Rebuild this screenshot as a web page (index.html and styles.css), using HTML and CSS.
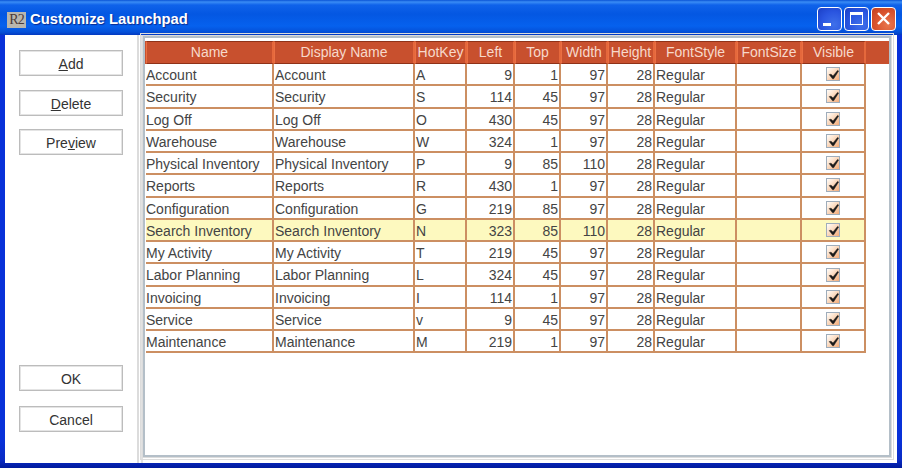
FILE: index.html
```html
<!DOCTYPE html>
<html lang="en">
<head>
    <meta charset="UTF-8">
    <title>Customize Launchpad</title>
    <link rel="stylesheet" href="styles.css">
</head>
<body>
<svg class="defs" width="0" height="0">
    <defs>
        <linearGradient id="checkFill" x1="0" y1="0" x2="1" y2="1">
            <stop offset="0" stop-color="#ffffff"/>
            <stop offset="0.35" stop-color="#fde6d2"/>
            <stop offset="1" stop-color="#f3a873"/>
        </linearGradient>
    </defs>
    <symbol id="check" viewBox="0 0 14 14">
        <rect x="0.5" y="0.5" width="13" height="13" fill="url(#checkFill)" stroke="#9fadbb"/>
        <path d="M3.2 7.6 L5 7.2 L7 9 L11.6 3.4 L12.6 4 L7.6 11.8 L6.6 11.8 Z" fill="#1a1a1a" stroke="#1a1a1a" stroke-width="0.5"/>
    </symbol>
</svg>
<div class="window">
    <div class="titlebar">
        <span class="appicon">R2</span>
        <span class="title">Customize Launchpad</span>
        <div class="winbtns">
            <span class="winbtn"><i class="min"></i></span>
            <span class="winbtn"><i class="max"></i></span>
            <span class="winbtn close">
                <svg width="17" height="17" viewBox="0 0 17 17"><path d="M3 3 L14 14 M14 3 L3 14" stroke="#fff" stroke-width="2.4" fill="none"/></svg>
            </span>
        </div>
    </div>
    <div class="content">
        <div class="side">
            <div class="btngroup">
                <p class="btn"><u>A</u>dd</p>
                <p class="btn"><u>D</u>elete</p>
                <p class="btn">Pre<u>v</u>iew</p>
            </div>
            <div class="btngroup">
                <p class="btn">OK</p>
                <p class="btn">Cancel</p>
            </div>
        </div>
        <div class="split"></div>
        <div class="pane">
            <div class="head">
                <div class="row">
                    <span>Name</span><span>Display Name</span><span>HotKey</span><span>Left</span><span>Top</span><span>Width</span><span>Height</span><span>FontStyle</span><span>FontSize</span><span>Visible</span>
                </div>
            </div>
            <div class="row item"><span>Account</span><span>Account</span><span>A</span><span class="num">9</span><span class="num">1</span><span class="num">97</span><span class="num">28</span><span>Regular</span><span></span><span class="vis"><svg width="14" height="14"><use href="#check"/></svg></span></div>
            <div class="row item"><span>Security</span><span>Security</span><span>S</span><span class="num">114</span><span class="num">45</span><span class="num">97</span><span class="num">28</span><span>Regular</span><span></span><span class="vis"><svg width="14" height="14"><use href="#check"/></svg></span></div>
            <div class="row item"><span>Log Off</span><span>Log Off</span><span>O</span><span class="num">430</span><span class="num">45</span><span class="num">97</span><span class="num">28</span><span>Regular</span><span></span><span class="vis"><svg width="14" height="14"><use href="#check"/></svg></span></div>
            <div class="row item"><span>Warehouse</span><span>Warehouse</span><span>W</span><span class="num">324</span><span class="num">1</span><span class="num">97</span><span class="num">28</span><span>Regular</span><span></span><span class="vis"><svg width="14" height="14"><use href="#check"/></svg></span></div>
            <div class="row item"><span>Physical Inventory</span><span>Physical Inventory</span><span>P</span><span class="num">9</span><span class="num">85</span><span class="num">110</span><span class="num">28</span><span>Regular</span><span></span><span class="vis"><svg width="14" height="14"><use href="#check"/></svg></span></div>
            <div class="row item"><span>Reports</span><span>Reports</span><span>R</span><span class="num">430</span><span class="num">1</span><span class="num">97</span><span class="num">28</span><span>Regular</span><span></span><span class="vis"><svg width="14" height="14"><use href="#check"/></svg></span></div>
            <div class="row item"><span>Configuration</span><span>Configuration</span><span>G</span><span class="num">219</span><span class="num">85</span><span class="num">97</span><span class="num">28</span><span>Regular</span><span></span><span class="vis"><svg width="14" height="14"><use href="#check"/></svg></span></div>
            <div class="row item selected"><span>Search Inventory</span><span>Search Inventory</span><span>N</span><span class="num">323</span><span class="num">85</span><span class="num">110</span><span class="num">28</span><span>Regular</span><span></span><span class="vis"><svg width="14" height="14"><use href="#check"/></svg></span></div>
            <div class="row item"><span>My Activity</span><span>My Activity</span><span>T</span><span class="num">219</span><span class="num">45</span><span class="num">97</span><span class="num">28</span><span>Regular</span><span></span><span class="vis"><svg width="14" height="14"><use href="#check"/></svg></span></div>
            <div class="row item"><span>Labor Planning</span><span>Labor Planning</span><span>L</span><span class="num">324</span><span class="num">45</span><span class="num">97</span><span class="num">28</span><span>Regular</span><span></span><span class="vis"><svg width="14" height="14"><use href="#check"/></svg></span></div>
            <div class="row item"><span>Invoicing</span><span>Invoicing</span><span>I</span><span class="num">114</span><span class="num">1</span><span class="num">97</span><span class="num">28</span><span>Regular</span><span></span><span class="vis"><svg width="14" height="14"><use href="#check"/></svg></span></div>
            <div class="row item"><span>Service</span><span>Service</span><span>v</span><span class="num">9</span><span class="num">45</span><span class="num">97</span><span class="num">28</span><span>Regular</span><span></span><span class="vis"><svg width="14" height="14"><use href="#check"/></svg></span></div>
            <div class="row item"><span>Maintenance</span><span>Maintenance</span><span>M</span><span class="num">219</span><span class="num">1</span><span class="num">97</span><span class="num">28</span><span>Regular</span><span></span><span class="vis"><svg width="14" height="14"><use href="#check"/></svg></span></div>
        </div>
    </div>
</div>
</body>
</html>
```

FILE: styles.css
```css
*{margin: 0;padding: 0;box-sizing: border-box;}
html,body{
    overflow: hidden;
    width: 902px;
    height: 468px;
}
body{
    font-family: "Liberation Sans", Arial, sans-serif;
    font-size: 14px;
    color: #444;
    background-color: #0831d9;
}
.defs{position: absolute;}

.window{
    display: flex;
    flex-direction: column;
    height: 468px;
    padding: 0 5px 5px;
    background: linear-gradient(#0831d9 0, #0831d9 440px, #0a2bc4 460px, #001a9c 468px);
}
.titlebar{
    display: flex;
    align-items: center;
    flex: none;
    height: 35px;
    margin: 0 -5px;
    padding: 5px 6px 0 7px;
    background: linear-gradient(#0a53d6 0, #3a8cf5 2px, #0f62ea 5px, #0457e2 14px, #0661ee 26px, #0450d8 32px, #0339c0 35px);
}
.appicon{
    width: 19px;
    height: 16px;
    margin-right: 4px;
    font-family: "Liberation Serif", serif;
    font-size: 14px;
    line-height: 16px;
    letter-spacing: -1px;
    text-align: center;
    color: #4a3a3a;
    background-color: #b9b6ae;
}
.title{
    flex: 1;
    padding-bottom: 2px;
    font-size: 14.8px;
    font-weight: bold;
    color: #fff;
    text-shadow: 1px 1px 1px #0a2a90;
}
.winbtns{display: flex;gap: 2px;margin-top: -3px;}
.winbtn{
    display: flex;
    position: relative;
    width: 25px;
    height: 24px;
    border: 1px solid #fff;
    border-radius: 4px;
    background: radial-gradient(circle at 70% 75%, #3f70ea, #2a55e0 55%, #1a3ec4);
}
.winbtn .min{
    position: absolute;
    left: 5px;
    bottom: 4px;
    width: 8px;
    height: 3px;
    background-color: #fff;
}
.winbtn .max{
    position: absolute;
    left: 5px;
    top: 4px;
    width: 13px;
    height: 13px;
    border: 1px solid #fff;
    border-top-width: 3px;
}
.winbtn.close{
    align-items: center;
    justify-content: center;
    background: radial-gradient(circle at 70% 75%, #e8764e, #d9532e 55%, #c23f1e);
}

.content{
    display: flex;
    flex: 1;
    min-height: 0;
    background-color: #fff;
}
.side{
    display: flex;
    flex-direction: column;
    justify-content: space-between;
    flex: none;
    width: 132px;
    padding: 15px 14px 31px;
}
.btngroup{display: flex;flex-direction: column;gap: 13.5px;}
.btngroup + .btngroup{gap: 15px;}
.btn{
    width: 104px;
    height: 26px;
    border: 1px solid #bcbcbc;
    outline: 1px solid #e4e4e4;
    outline-offset: -2px;
    font-size: 14px;
    line-height: 26px;
    text-align: center;
    color: #333;
    background-color: #fff;
}
.btngroup + .btngroup .btn{line-height: 27px;}
.split{
    flex: none;
    width: 6px;
    border-left: 2px solid #dcdcdc;
    border-right: 2px solid #e2e2e2;
    background-color: #fff;
}
.pane{
    flex: 1;
    min-width: 0;
    padding-top: 3px;
    padding-left: 1px;
    border: 2px solid #b4bfc8;
    margin: 1px 6px 6px 0;
    outline: 3px double #dcdcdc;
    background-color: #fff;
}
.head{
    height: 23px;
    margin-left: -1px;
    padding-left: 1px;
    background-color: #c8502e;
}
.row{
    display: grid;
    grid-template-columns: 128px 141px 52px 48px 46px 47px 47px 82px 65px 64px;
    width: 720px;
}
.row span{
    overflow: hidden;
    white-space: nowrap;
    padding: 0 1px;
    border-right: 2px solid #cc8f62;
}
.item span:first-child{padding-left: 0;}
.head .row{height: 23px;}
.head span{
    line-height: 21px;
    text-align: center;
    color: #f7d9cb;
    border: 1px solid #8f3218;
    border-left-color: #ea6f42;
    border-right: 2px solid #e5683c;
    background-color: #c8502e;
}
.item{
    height: 22.27px;
    border-bottom: 2px solid #cc8f62;
    line-height: 22px;
}
.item .num{text-align: right;}
.item .vis{
    display: flex;
    align-items: center;
    justify-content: center;
}
.selected{
    background-color: #fdf9bf;
}
```
